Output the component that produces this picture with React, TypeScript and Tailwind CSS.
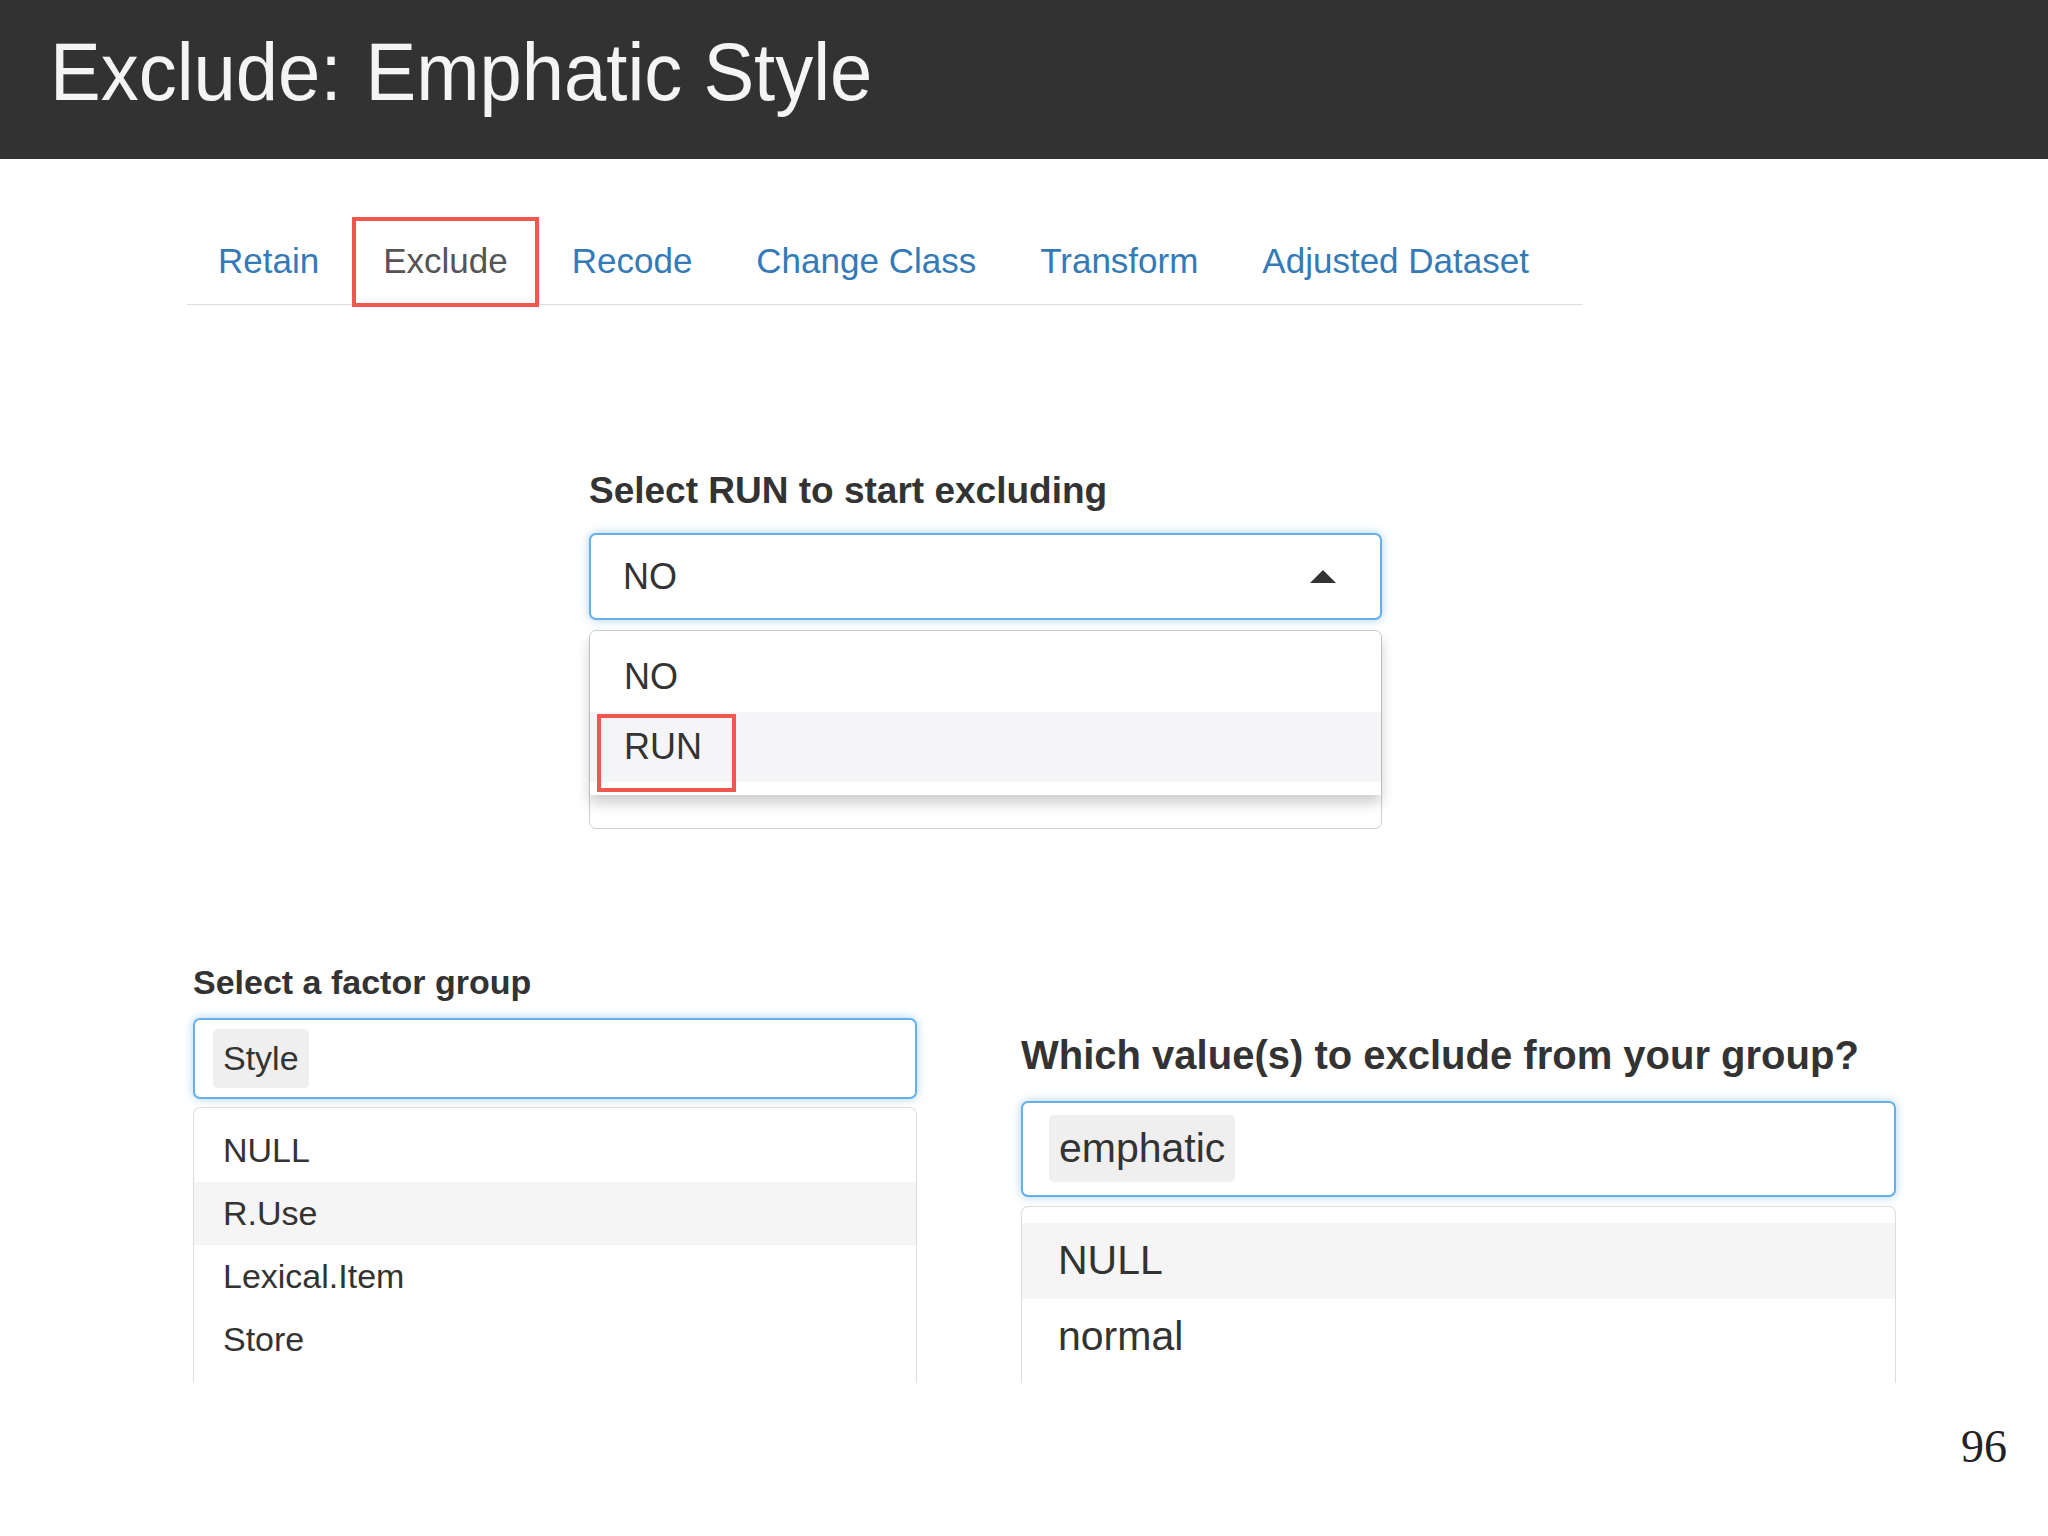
import React from 'react';

const tabs = ['Retain', 'Exclude', 'Recode', 'Change Class', 'Transform', 'Adjusted Dataset'];

const factorOptions = ['NULL', 'R.Use', 'Lexical.Item', 'Store'];

const Tab: React.FC<{ label: string; active: boolean }> = ({ label, active }) => (
  <div
    className={`relative mr-[2px] -mb-px flex h-[88px] shrink-0 items-center whitespace-nowrap px-[30px] text-[35px] ${
      active ? 'border border-[#ddd] border-b-white bg-white text-[#555]' : 'border border-transparent text-[#337ab7]'
    }`}
  >
    {label}
    {active && <div className="absolute -left-[1px] -right-[1px] -top-[1px] -bottom-[3px] border-[4px] border-[#f2574f]" />}
  </div>
);

const Chip: React.FC<{ text: string; className: string }> = ({ text, className }) => (
  <div className={`flex items-center rounded-[5px] bg-[#efefef] px-[10px] text-[#333] ${className}`}>{text}</div>
);

export default function App() {
  return (
    <div className="relative h-[1536px] w-[2048px] overflow-hidden bg-white font-['Liberation_Sans',Arial,sans-serif]">
      {/* slide title */}
      <header className="flex h-[159px] items-center bg-[#323232] pb-[15px] pl-[50px]">
        <h1 className="flex origin-left scale-y-[1.08] whitespace-nowrap text-[76px] leading-none text-[#f4f4f4]">
          <span>Exclude:</span>
          <span className="ml-[24px]">Emphatic Style</span>
        </h1>
      </header>

      {/* tabs */}
      <nav className="ml-[187px] mt-[58px] flex w-[1396px] border-b border-[#ddd]">
        {tabs.map((t) => (
          <Tab key={t} label={t} active={t === 'Exclude'} />
        ))}
      </nav>

      {/* RUN select */}
      <section className="ml-[589px] mt-[167px] w-[793px]">
        <div className="mb-[24px] whitespace-nowrap text-[37px] font-bold leading-none text-[#333]">Select RUN to start excluding</div>
        <div className="flex h-[87px] items-center justify-between rounded-[7px] border-2 border-[#66afe9] bg-white pl-[32px] pr-[44px] text-[36px] text-[#333] shadow-[0_0_10px_rgba(102,175,233,0.55)]">
          <span>NO</span>
          <span className="h-0 w-0 border-x-[13px] border-b-[13px] border-x-transparent border-b-[#333]" />
        </div>
        <div className="mt-[10px] h-[199px] rounded-[7px] border border-[#cfcfcf] bg-white">
          <div className="rounded-t-[7px] bg-white pb-[13px] pt-[11px] text-[36px] text-[#333] shadow-[0_8px_14px_rgba(0,0,0,0.2)]">
            <div className="flex h-[70px] items-center pl-[34px]">NO</div>
            <div className="relative flex h-[70px] items-center bg-[#f5f5f7] pl-[34px]">
              RUN
              <div className="absolute left-[7px] top-[2px] h-[78px] w-[139px] border-[4px] border-[#f2574f]" />
            </div>
          </div>
        </div>
      </section>

      {/* factor group + values */}
      <section className="ml-[193px] mt-[136px] flex items-start gap-[104px]">
        <div className="w-[724px]">
          <div className="mb-[19px] whitespace-nowrap text-[34px] font-bold leading-none text-[#333]">Select a factor group</div>
          <div className="flex h-[81px] items-start rounded-[7px] border-2 border-[#66afe9] bg-white pl-[18px] pt-[9px] shadow-[0_0_10px_rgba(102,175,233,0.55)]">
            <Chip text="Style" className="h-[59px] text-[34px]" />
          </div>
          <div className="mt-[8px] h-[276px] overflow-hidden rounded-t-[7px] border border-b-0 border-[#ddd] bg-white pt-[11px] text-[34px] text-[#333]">
            {factorOptions.map((o) => (
              <div key={o} className={`flex h-[63px] items-center pl-[29px] ${o === 'R.Use' ? 'bg-[#f5f5f5]' : ''}`}>
                {o}
              </div>
            ))}
          </div>
        </div>

        <div className="w-[875px] pt-[70px]">
          <div className="mb-[26px] whitespace-nowrap text-[40px] font-bold leading-none text-[#333]">Which value(s) to exclude from your group?</div>
          <div className="flex h-[96px] items-start rounded-[7px] border-2 border-[#66afe9] bg-white pl-[26px] pt-[12px] shadow-[0_0_10px_rgba(102,175,233,0.55)]">
            <Chip text="emphatic" className="h-[67px] text-[41px]" />
          </div>
          <div className="mt-[9px] h-[177px] overflow-hidden rounded-t-[7px] border border-b-0 border-[#ddd] bg-white pt-[16px] text-[41px] text-[#333]">
            <div className="flex h-[76px] items-center bg-[#f5f5f5] pl-[36px]">NULL</div>
            <div className="flex h-[76px] items-center pl-[36px]">normal</div>
          </div>
        </div>
      </section>

      {/* page number */}
      <div className="mt-[41px] flex justify-end pr-[41px]">
        <span className="font-['Liberation_Serif',serif] text-[46px] leading-none text-[#222]">96</span>
      </div>
    </div>
  );
}
